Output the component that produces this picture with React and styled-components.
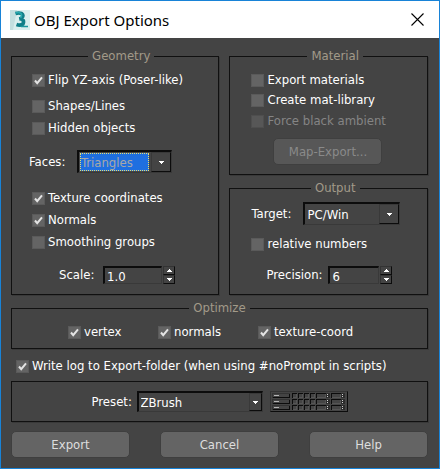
import React from "react";
import styled, { createGlobalStyle, css } from "styled-components";

const GlobalStyle = createGlobalStyle`
  * { box-sizing: border-box; }
  body { margin: 0; background: #444; }
  body, input, select, button {
    font-family: "DejaVu Sans Condensed", Tahoma, sans-serif;
    font-size: 13px;
  }
  label, legend { line-height: 16px; }
`;

const Dialog = styled.form`
  min-height: 100vh;
  display: flex;
  flex-direction: column;
  border: 1px solid #1883d7;
  background: #444;
  color: #fff;
`;

const TitleBar = styled.header`
  display: flex;
  align-items: center;
  height: 37px;
  padding: 0 15px 0 9px;
  background: #fff;
  color: #000;
`;

const Title = styled.h1`
  flex: 1;
  margin: 0 0 0 4px;
  font: 400 15px/20px "Noto Sans", sans-serif;
`;

const CloseButton = styled.button`
  display: flex;
  padding: 0;
  border: 0;
  background: none;
`;

const Body = styled.main`
  display: flex;
  flex-direction: column;
  padding: 10px 11px 10px 10px;
`;

const Columns = styled.div`
  display: grid;
  grid-template-columns: 209fr 199fr;
  gap: 10px;
`;

const Stack = styled.div`
  display: flex;
  flex-direction: column;
  gap: 5px;
`;

const panel = css`
  margin: 0;
  border: 1px solid #101010;
  box-shadow: 1px 1px 0 #393939;
`;

const Group = styled.fieldset`
  ${panel}
  min-width: 0;
  padding: ${(p) => p.$pad || "5px 8px 10px 20px"};
  flex: ${(p) => (p.$grow ? 1 : "none")};
`;

const Legend = styled.legend`
  margin: 0 auto;
  padding: 0 4px;
  color: #a29a89;
`;

const CheckLabel = styled.label`
  display: flex;
  align-items: center;
  gap: 3px;
  height: ${(p) => (p.$short ? 20 : 22)}px;
  white-space: nowrap;
  color: ${(p) => (p.$dim ? "#858585" : "#fff")};
`;

const CheckFrame = styled.span`
  display: grid;
  width: 13px;
  height: 13px;
  > * { grid-area: 1 / 1; }
`;

const CheckInput = styled.input`
  appearance: none;
  width: 13px;
  height: 13px;
  margin: 0;
  border: 1px solid #5a5a5a;
  background: #646464;
  &:disabled { background: #575757; border-color: #4e4e4e; }
  & + svg { visibility: hidden; pointer-events: none; }
  &:checked + svg { visibility: visible; }
`;

const Field = styled.div`
  display: flex;
  align-items: center;
  margin: ${(p) => p.$margin || 0};
`;

const FieldLabel = styled.label`
  min-width: ${(p) => p.$width}px;
  white-space: nowrap;
`;

const sunken = css`
  border: 1px solid #393939;
  border-top: 2px solid #0c0c0c;
  border-left: 2px solid #0c0c0c;
`;

const Combo = styled.span`
  ${sunken}
  display: flex;
  width: ${(p) => p.$width}px;
  height: ${(p) => p.$height || 23}px;
`;

const Select = styled.select`
  appearance: none;
  flex: 1;
  min-width: 0;
  margin: ${(p) => (p.$active ? "1px 2px 1px 1px" : 0)};
  padding: 0 2px;
  padding-left: ${(p) => (p.$active ? 1 : 2)}px;
  border: 0;
  border-radius: 0;
  outline: ${(p) => (p.$active ? "1px dotted #e8df70" : "none")};
  outline-offset: -1px;
  background: ${(p) => (p.$active ? "#1f6fe0" : "transparent")};
  color: ${(p) => (p.$active ? "#a8a8a8" : "#fff")};
`;

const Arrow = styled.span`
  display: flex;
  align-items: center;
  justify-content: center;
  width: ${(p) => p.$width || 20}px;
  border: 1px solid #393939;
  border-right-color: #0c0c0c;
  border-bottom-color: #0c0c0c;
`;

const Spinner = styled.span`
  display: flex;
  gap: 1px;
`;

const SpinInput = styled.input`
  ${sunken}
  width: ${(p) => p.$width}px;
  height: 18px;
  padding: 2px 0 0 2px;
  border-radius: 0;
  outline: none;
  background: transparent;
  color: #fff;
`;

const SpinButtons = styled.span`
  display: flex;
  flex-direction: column;
`;

const SpinButton = styled.button`
  display: flex;
  align-items: center;
  justify-content: center;
  width: 12px;
  height: 9px;
  padding: 0;
  border: 1px solid #333;
  border-right-color: #0c0c0c;
  border-bottom-color: #0c0c0c;
  background: #444;
`;

const PushButton = styled.button`
  height: 27px;
  width: ${(p) => (p.$width ? `${p.$width}px` : "100%")};
  margin: ${(p) => p.$margin || 0};
  padding: 0;
  border: 1px solid #3f3f3f;
  border-radius: 5px;
  background: #646464;
  color: #dedede;
  &:disabled { background: #575757; color: #8a8a8a; }
`;

const OptimizeRow = styled.div`
  display: grid;
  grid-template-columns: 90fr 100fr 161fr;
  padding-left: 48px;
`;

const LogRow = styled.div`
  padding: 6px 5px 4px;
`;

const PresetBar = styled.div`
  ${panel}
  display: flex;
  align-items: center;
  justify-content: center;
  gap: 7px;
  height: 41px;
`;

const PresetButton = styled.button`
  display: flex;
  padding: 0;
  border: 1px solid #333;
  border-right-color: #0c0c0c;
  border-bottom-color: #0c0c0c;
  background: none;
`;

const Actions = styled.footer`
  display: grid;
  grid-template-columns: repeat(3, 1fr);
  gap: 30px;
  margin-top: 9px;
`;

const Spacer = styled.div`
  height: ${(p) => p.$size}px;
`;

function Check({ label, checked, disabled, short }) {
  return (
    <CheckLabel $dim={disabled} $short={short}>
      <CheckFrame>
        <CheckInput type="checkbox" defaultChecked={checked} disabled={disabled} />
        <svg width="13" height="13" viewBox="0 0 13 13" fill="none">
          <path d="M3 6.500 5.200 9.200 10 3.400" stroke="#e4e4e4" strokeWidth="2" />
        </svg>
      </CheckFrame>
      {label}
    </CheckLabel>
  );
}

function Dropdown({ id, value, width, height, arrowWidth, active }) {
  return (
    <Combo $width={width} $height={height}>
      <Select id={id} defaultValue={value} $active={active}>
        <option>{value}</option>
      </Select>
      <Arrow $width={arrowWidth}>
        <svg width="5" height="3" viewBox="0 0 5 3" shapeRendering="crispEdges">
          <path d="M0 0h5v1H4v1H3v1H2V2H1V1H0z" fill="#fff" />
        </svg>
      </Arrow>
    </Combo>
  );
}

function NumberField({ id, value, width }) {
  return (
    <Spinner>
      <SpinInput id={id} type="text" defaultValue={value} $width={width} />
      <SpinButtons>
        <SpinButton type="button" aria-label="Increase">
          <svg width="5" height="3" viewBox="0 0 5 3" shapeRendering="crispEdges">
            <path d="M2 0h1v1h1v1h1v1H0V2h1V1h1z" fill="#fff" />
          </svg>
        </SpinButton>
        <SpinButton type="button" aria-label="Decrease">
          <svg width="5" height="3" viewBox="0 0 5 3" shapeRendering="crispEdges">
            <path d="M0 0h5v1H4v1H3v1H2V2H1V1H0z" fill="#fff" />
          </svg>
        </SpinButton>
      </SpinButtons>
    </Spinner>
  );
}

function AppLogo() {
  return (
    <svg width="20" height="20" viewBox="0 0 20 20" fill="none">
      <path d="M0 0h20v20H0z" fill="#d9efee" />
      <path d="M0 0h7L3 20H0z" fill="#c3dfdf" />
      <path
        d="M5.500 3.500Q9 2.500 11.500 3.500Q14 5.500 12 8L9.500 9H12Q14.500 11 13 14Q10.500 16 6.500 14.500"
        stroke="#107f88"
        strokeWidth="3.600"
      />
      <path d="M5.500 3Q9 2 11 3.500Q12.500 5.500 10.500 8" stroke="#27aaae" strokeWidth="1.500" />
      <path d="M11 16.500h7" stroke="#1b969c" strokeWidth="1.500" />
    </svg>
  );
}

/* Raised and sunken cells of one mixer line: [x, width] */
const CELLS = [[1, 18], [21, 5], [27, 5], [33, 5], [39, 5], [45, 10], [60, 10]];

function PresetGrid() {
  return (
    <svg width="76" height="19" viewBox="0 0 76 19" shapeRendering="crispEdges">
      {[1, 7, 13].map((y) => (
        <g key={y}>
          {CELLS.map(([x, w], i) => (
            <g key={x}>
              <rect x={x} y={y} width={w} height="5" fill={i ? "#0c0c0c" : "#333"} />
              <rect x={x + 1} y={y + 1} width={w - 1} height="4" fill={i ? "#555" : "#0c0c0c"} />
              <rect x={x + 1} y={y + 1} width={w - 2} height="3" fill="#444" />
            </g>
          ))}
          <rect x="3" y={y + 2} width="5" height="1" fill="#b5b5b5" />
          {[55, 70].map((x) => (
            <g key={x}>
              <rect x={x} y={y} width="4" height="5" fill="#2c2c2c" />
              <rect x={x + 1} y={y + 1} width="1" height="1" fill="#d0d0d0" />
              <rect x={x + 1} y={y + 3} width="1" height="1" fill="#d0d0d0" />
            </g>
          ))}
        </g>
      ))}
    </svg>
  );
}

export default function App() {
  return (
    <>
      <GlobalStyle />
      <Dialog onSubmit={(e) => e.preventDefault()}>
        <TitleBar>
          <AppLogo />
          <Title>OBJ Export Options</Title>
          <CloseButton type="button" aria-label="Close">
            <svg width="13" height="13" viewBox="0 0 13 13">
              <path d="M.5.5l12 12M12.500 .5l-12 12" stroke="#000" strokeWidth="1.100" />
            </svg>
          </CloseButton>
        </TitleBar>
        <Body>
          <Columns>
            <Group>
              <Legend>Geometry</Legend>
              <Check label="Flip YZ-axis (Poser-like)" checked />
              <Spacer $size={4} />
              <Check label="Shapes/Lines" />
              <Check label="Hidden objects" />
              <Field $margin="11px 0 14px -3px">
                <FieldLabel htmlFor="faces" $width={48}>Faces:</FieldLabel>
                <Dropdown id="faces" value="Triangles" width={95} active />
              </Field>
              <Check label="Texture coordinates" checked />
              <Check label="Normals" checked />
              <Check label="Smoothing groups" />
              <Field $margin="13px 0 0 27px">
                <FieldLabel htmlFor="scale" $width={44}>Scale:</FieldLabel>
                <NumberField id="scale" value="1.0" width={59} />
              </Field>
            </Group>
            <Stack>
              <Group $pad="6px 8px 9px 21px">
                <Legend>Material</Legend>
                <Check label="Export materials" short />
                <Check label="Create mat-library" short />
                <Check label="Force black ambient" disabled />
                <PushButton type="button" disabled $width={109} $margin="6px 0 0 22px">
                  Map-Export...
                </PushButton>
              </Group>
              <Group $grow $pad="6px 8px 9px 21px">
                <Legend>Output</Legend>
                <Field>
                  <FieldLabel htmlFor="target" $width={52}>Target:</FieldLabel>
                  <Dropdown id="target" value="PC/Win" width={97} />
                </Field>
                <Spacer $size={8} />
                <Check label="relative numbers" />
                <Field $margin="11px 0 0 15px">
                  <FieldLabel htmlFor="precision" $width={62}>Precision:</FieldLabel>
                  <NumberField id="precision" value="6" width={51} />
                </Field>
              </Group>
            </Stack>
          </Columns>
          <Spacer $size={5} />
          <Group $pad="5px 8px 5px">
            <Legend>Optimize</Legend>
            <OptimizeRow>
              <Check label="vertex" checked />
              <Check label="normals" checked />
              <Check label="texture-coord" checked />
            </OptimizeRow>
          </Group>
          <LogRow>
            <Check label="Write log to Export-folder (when using #noPrompt in scripts)" checked />
          </LogRow>
          <PresetBar>
            <Field>
              <FieldLabel htmlFor="preset" $width={45}>Preset:</FieldLabel>
              <Dropdown id="preset" value="ZBrush" width={126} height={21} arrowWidth={13} />
            </Field>
            <PresetButton type="button" aria-label="Edit presets">
              <PresetGrid />
            </PresetButton>
          </PresetBar>
          <Actions>
            <PushButton type="submit">Export</PushButton>
            <PushButton type="button">Cancel</PushButton>
            <PushButton type="button">Help</PushButton>
          </Actions>
        </Body>
      </Dialog>
    </>
  );
}
